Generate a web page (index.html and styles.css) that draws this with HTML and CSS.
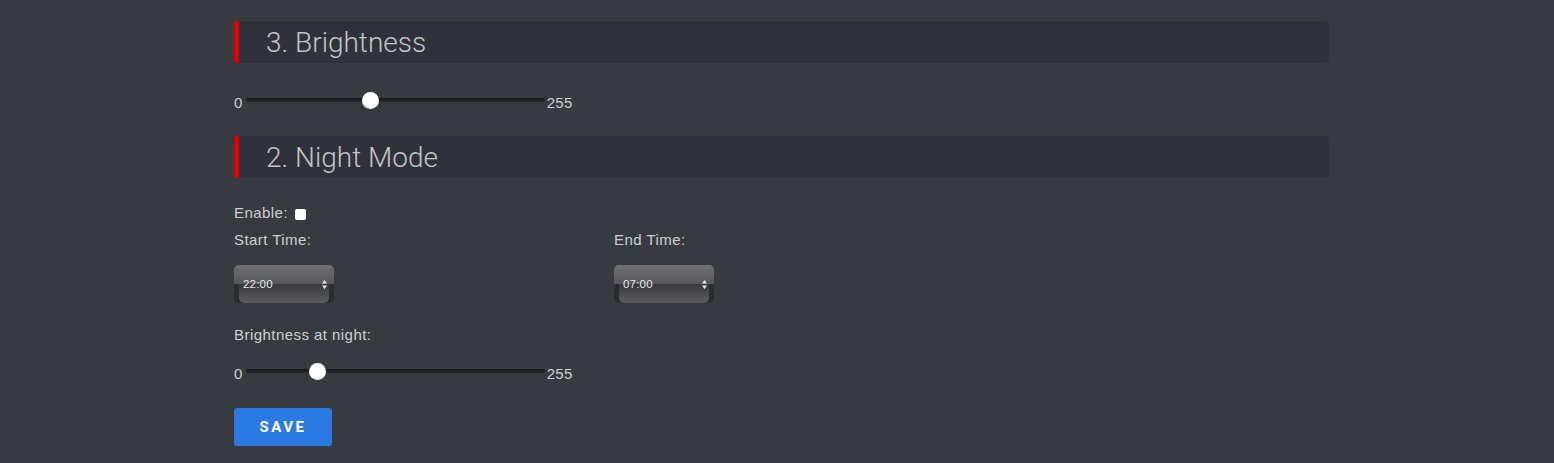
FILE: index.html
```html
<!DOCTYPE html>
<html>
<head>
<meta charset="utf-8">
<link rel="stylesheet" href="styles.css">
</head>
<body>
<div class="page">
  <h2 class="section-title">3. Brightness</h2>
  <div class="range-row first">
    <span class="range-min">0</span>
    <input class="range" type="range" min="0" max="255" value="105">
    <span class="range-max">255</span>
  </div>

  <h2 class="section-title second">2. Night Mode</h2>
  <div class="enable-row">
    <span class="label">Enable:</span>
    <span class="checkbox"></span>
  </div>
  <div class="time-grid">
    <div class="time-col">
      <div class="label">Start Time:</div>
      <div class="time-box">
        <span class="time-value">22:00</span>
        <svg class="spin" width="5" height="9" viewBox="0 0 5 9"><path d="M2.5 0L5 3.5H0Z M2.5 9L5 5.5H0Z" fill="#e6e6e6"/></svg>
      </div>
    </div>
    <div class="time-col">
      <div class="label">End Time:</div>
      <div class="time-box">
        <span class="time-value">07:00</span>
        <svg class="spin" width="5" height="9" viewBox="0 0 5 9"><path d="M2.5 0L5 3.5H0Z M2.5 9L5 5.5H0Z" fill="#e6e6e6"/></svg>
      </div>
    </div>
  </div>
  <div class="label night-label">Brightness at night:</div>
  <div class="range-row night">
    <span class="range-min">0</span>
    <input class="range" type="range" min="0" max="255" value="57">
    <span class="range-max">255</span>
  </div>
  <button class="save">SAVE</button>
</div>
</body>
</html>
```
FILE: styles.css
```css
html, body {
  margin: 0;
  padding: 0;
  background: #373a3f;
  height: 100%;
}
body {
  font-family: "Liberation Sans", Arial, sans-serif;
  color: #cfcfcf;
}
.page {
  margin-left: 234px;
  width: 1095px;
  padding-top: 21px;
}
.section-title {
  margin: 0;
  height: 42px;
  box-sizing: border-box;
  background: #2f323a;
  border-left: 5px solid #e00000;
  border-radius: 2px 5px 5px 2px;
  padding-left: 27px;
  font-family: Roboto, "Liberation Sans", sans-serif;
  font-weight: 300;
  font-size: 28px;
  line-height: 43px;
  color: #c4c4c4;
}
.section-title.second {
  margin-top: 26px;
}
.range-row {
  display: flex;
  align-items: center;
  height: 20px;
  font-size: 15px;
  letter-spacing: 0.3px;
  color: #cfcfcf;
}
.range-row.first {
  margin-top: 27px;
}
.range-min, .range-max {
  position: relative;
  top: 2px;
}
.range {
  -webkit-appearance: none;
  appearance: none;
  width: 299px;
  height: 20px;
  margin: 0 2px 0 3px;
  background: transparent;
}
.range::-webkit-slider-runnable-track {
  height: 4px;
  border-radius: 2px;
  background: linear-gradient(#16171a, #26282c);
}
.range::-webkit-slider-thumb {
  -webkit-appearance: none;
  width: 17px;
  height: 17px;
  border-radius: 50%;
  background: #ffffff;
  margin-top: -6.5px;
}
.enable-row {
  display: flex;
  align-items: center;
  margin-top: 27px;
  height: 16px;
}
.label {
  font-size: 15px;
  letter-spacing: 0.45px;
  line-height: 16px;
  color: #cfcfcf;
}
.checkbox {
  display: inline-block;
  width: 11px;
  height: 11px;
  margin-left: 7px;
  margin-top: 2px;
  background: #ffffff;
  border-radius: 2px;
}
.time-grid {
  display: grid;
  grid-template-columns: 380px 380px;
  margin-top: 11px;
}
.time-box {
  position: relative;
  margin-top: 17px;
  width: 100px;
  height: 38px;
  box-sizing: border-box;
  border-radius: 5px;
  background: linear-gradient(#6f6f71, #58585a 50%, #2a2b2e 50%, #2a2b2e);
  display: flex;
  align-items: center;
  justify-content: space-between;
  padding: 0 7px 0 9px;
}
.time-box::after {
  content: "";
  position: absolute;
  left: 5px;
  right: 5px;
  top: 50%;
  bottom: 0;
  border-radius: 0 0 5px 5px;
  background: linear-gradient(#38393b, #5d5d60);
}
.time-value, .spin {
  position: relative;
  z-index: 1;
}
.time-value {
  font-size: 11.5px;
  letter-spacing: 0.2px;
  color: #e8e8e8;
}
.night-label {
  margin-top: 24px;
}
.range-row.night {
  margin-top: 18px;
}
.save {
  margin-top: 27px;
  width: 98px;
  height: 38px;
  border: none;
  border-radius: 3px;
  background: #2b7ae4;
  color: #ffffff;
  font-family: Roboto, "Liberation Sans", sans-serif;
  font-weight: 700;
  font-size: 15px;
  letter-spacing: 2.5px;
  padding: 0;
}
```
